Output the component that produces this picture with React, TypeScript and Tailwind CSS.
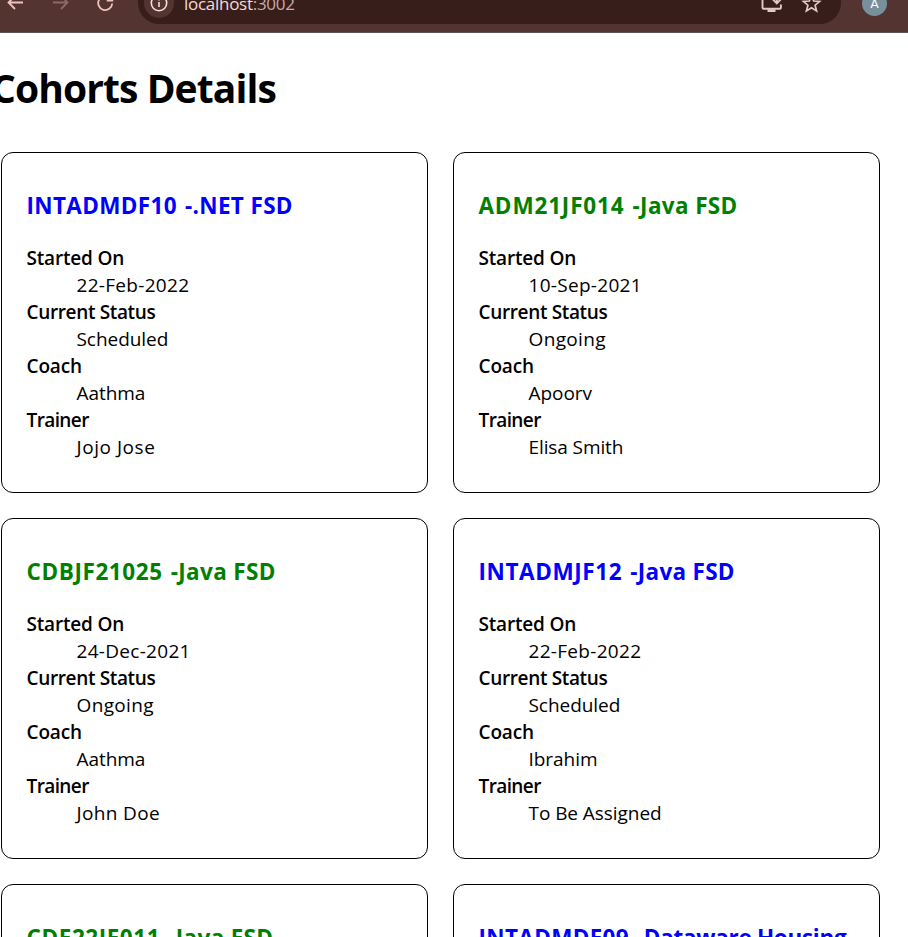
type Cohort = {
  code: string;
  course: string;
  colorClass: string;
  codeClass: string;
  courseClass: string;
  started: string;
  status: string;
  coach: string;
  trainer: string;
  trainerClass: string;
};

const BLUE = 'text-[#0000ff]';
const GREEN = 'text-[#008000]';

const cohorts: Cohort[] = [
  { code: 'INTADMDF10', course: '-.NET FSD', colorClass: BLUE, codeClass: 'tracking-[0.35px]', courseClass: 'tracking-[0.35px]', started: '22-Feb-2022', status: 'Scheduled', coach: 'Aathma', trainer: 'Jojo Jose', trainerClass: 'tracking-[0.55px]' },
  { code: 'ADM21JF014', course: '-Java FSD', colorClass: GREEN, codeClass: 'tracking-[0.85px]', courseClass: 'tracking-[0.35px]', started: '10-Sep-2021', status: 'Ongoing', coach: 'Apoorv', trainer: 'Elisa Smith', trainerClass: 'tracking-[-0.1px]' },
  { code: 'CDBJF21025', course: '-Java FSD', colorClass: GREEN, codeClass: 'tracking-[0.6px]', courseClass: 'tracking-[0.35px]', started: '24-Dec-2021', status: 'Ongoing', coach: 'Aathma', trainer: 'John Doe', trainerClass: 'tracking-[0.35px]' },
  { code: 'INTADMJF12', course: '-Java FSD', colorClass: BLUE, codeClass: 'tracking-[0.6px]', courseClass: 'tracking-[0.3px]', started: '22-Feb-2022', status: 'Scheduled', coach: 'Ibrahim', trainer: 'To Be Assigned', trainerClass: 'tracking-[-0.06px]' },
  { code: 'CDE22JF011', course: '-Java FSD', colorClass: GREEN, codeClass: 'tracking-[0.6px]', courseClass: 'tracking-[0.35px]', started: '', status: 'Ongoing', coach: '', trainer: '', trainerClass: '' },
  { code: 'INTADMDF09', course: '-Dataware Housing', colorClass: BLUE, codeClass: 'tracking-[0.35px]', courseClass: 'tracking-[-0.3px]', started: '', status: 'Scheduled', coach: '', trainer: '', trainerClass: '' },
];

function Toolbar() {
  return (
    <header className="h-[33px] overflow-hidden border-b border-[#5f5050] bg-[#533431]">
      <div className="-mt-[18px] flex h-[42px] items-center gap-[21px] pl-[3px] text-[#f0c3bc]">
        <svg className="size-6 shrink-0" viewBox="0 0 24 24" fill="none" stroke="currentColor" strokeWidth="1.8">
          <path d="M20 11.500H6M12 5l-6.500 6.500L12 18" />
        </svg>
        <svg className="size-6 shrink-0 text-[#8e6a66]" viewBox="0 0 24 24" fill="none" stroke="currentColor" strokeWidth="1.8">
          <path d="M5 11.500h14M13 5l6.500 6.500L13 18" />
        </svg>
        <svg className="size-6 shrink-0" viewBox="0 0 24 24" fill="none" stroke="currentColor" strokeWidth="1.8">
          <path d="M19.200 12.500A7 7 0 1 1 17 7l2.200 2.300M19.300 4v5.600h-5.600" />
        </svg>
        <div className="flex h-[42px] w-[703px] shrink-0 items-center rounded-full bg-[#381e1b] pl-[6px] pr-[18px] text-[#e3c9c5]">
          <div className="flex size-[30px] items-center justify-center rounded-full bg-[#533431]">
            <svg className="size-5 text-[#f3dfdc]" viewBox="0 0 20 20" fill="none" stroke="currentColor" strokeWidth="1.6">
              <circle cx="10" cy="10" r="7.7" />
              <path d="M10 9v5M10 6v1.6" />
            </svg>
          </div>
          <div className="ml-[10px] flex-1 pt-[2px] font-['Open_Sans',sans-serif] text-[17px] leading-6 tracking-[-0.28px] text-[#f0dcd9]">
            localhost<span className="text-[#c9aba7]">:3002</span>
          </div>
          <svg className="size-6" viewBox="0 0 24 24" fill="none" stroke="currentColor" strokeWidth="1.9">
            <path d="M12 3H4.500Q3.500 3 3.500 4.500V16.800Q3.500 17.700 4.500 17.700H20.800Q21.900 17.700 21.900 16.700V13.500M17.800 3v9M13.500 8l4.300 4.300L22.100 8" />
            <path d="M8.500 19.600h8" strokeWidth="2.800" />
          </svg>
          <svg className="ml-4 size-6" viewBox="0 0 24 24" fill="none" stroke="currentColor" strokeWidth="1.7">
            <path d="M12.500 4.500l2.200 5.500 5.900.4-4.500 3.800 1.500 5.800-5.100-3.200-5.100 3.200 1.500-5.800-4.500-3.800 5.900-.4z" />
          </svg>
        </div>
        <div className="flex size-[25px] shrink-0 items-center justify-center rounded-full bg-[#78909c] font-[Roboto,sans-serif] text-[13px] leading-none text-white">A</div>
      </div>
    </header>
  );
}

function Field({ label, value, labelClass, valueClass }: { label: string; value: string; labelClass: string; valueClass: string }) {
  return (
    <>
      <dt className={`font-semibold ${labelClass}`}>{label}</dt>
      <dd className={`ml-[50px] h-[27px] ${valueClass}`}>{value}</dd>
    </>
  );
}

function CohortCard({ cohort }: { cohort: Cohort }) {
  return (
    <article className="h-[341px] rounded-[12px] border border-black pr-[25px] pl-[24.5px] pt-[37px] text-[19px] leading-[27px] whitespace-nowrap">
      <h3 className={`flex gap-[8px] text-[22.5px] leading-[32px] font-bold ${cohort.colorClass}`}>
        <span className={cohort.codeClass}>{cohort.code}</span>
        <span className={cohort.courseClass}>{cohort.course}</span>
      </h3>
      <dl className="mt-[23px]">
        <Field label="Started On" value={cohort.started} labelClass="tracking-[-0.18px]" valueClass="tracking-[0.3px]" />
        <Field label="Current Status" value={cohort.status} labelClass="tracking-[-0.35px]" valueClass={cohort.status === 'Ongoing' ? 'tracking-[0.35px]' : 'tracking-[-0.05px]'} />
        <Field label="Coach" value={cohort.coach} labelClass="tracking-[-0.15px]" valueClass="tracking-[-0.05px]" />
        <Field label="Trainer" value={cohort.trainer} labelClass="tracking-[-0.6px]" valueClass={cohort.trainerClass} />
      </dl>
    </article>
  );
}

export default function App() {
  return (
    <div className="h-[937px] overflow-hidden bg-white font-['Open_Sans','Noto_Sans',sans-serif] text-black">
      <Toolbar />
      <main className="pl-px">
        <h1 className="-ml-[10px] pt-[28px] text-[39px] leading-[54px] font-bold tracking-[-0.91px] whitespace-nowrap">Cohorts Details</h1>
        <div className="mt-[37px] grid grid-cols-[427px_427px] gap-[25px]">
          {cohorts.map((cohort) => (
            <CohortCard key={cohort.code} cohort={cohort} />
          ))}
        </div>
      </main>
    </div>
  );
}
